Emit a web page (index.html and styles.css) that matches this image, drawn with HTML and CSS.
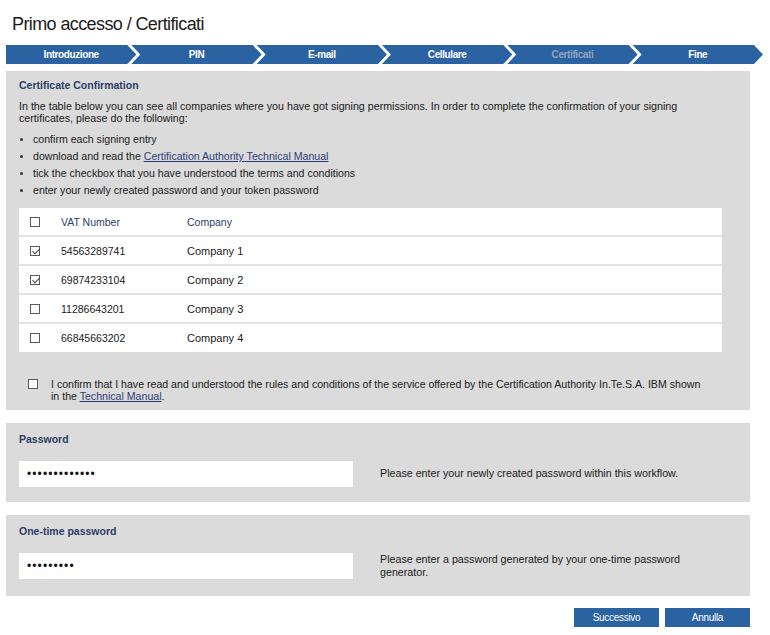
FILE: index.html
```html
<!DOCTYPE html>
<html lang="it">
<head>
<meta charset="utf-8">
<title>Primo accesso / Certificati</title>
<link rel="stylesheet" href="styles.css">
</head>
<body>
<div class="page">
  <h1 class="title">Primo accesso / Certificati</h1>

  <ol class="steps">
    <li class="step">Introduzione</li>
    <li class="step">PIN</li>
    <li class="step">E-mail</li>
    <li class="step">Cellulare</li>
    <li class="step step-current">Certificati</li>
    <li class="step">Fine</li>
  </ol>

  <section class="panel panel-cert">
    <h2 class="panel-title">Certificate Confirmation</h2>
    <p class="intro">In the table below you can see all companies where you have got signing permissions. In order to complete the confirmation of your signing certificates, please do the following:</p>
    <ul class="todo">
      <li>confirm each signing entry</li>
      <li>download and read the <a href="#" class="link">Certification Authority Technical Manual</a></li>
      <li>tick the checkbox that you have understood the terms and conditions</li>
      <li>enter your newly created password and your token password</li>
    </ul>

    <table class="companies">
      <thead>
        <tr>
          <th class="col-check"><span class="cb"></span></th>
          <th class="col-vat">VAT Number</th>
          <th class="col-company">Company</th>
        </tr>
      </thead>
      <tbody>
        <tr>
          <td class="col-check"><span class="cb cb-checked"></span></td>
          <td class="col-vat">54563289741</td>
          <td class="col-company">Company 1</td>
        </tr>
        <tr>
          <td class="col-check"><span class="cb cb-checked"></span></td>
          <td class="col-vat">69874233104</td>
          <td class="col-company">Company 2</td>
        </tr>
        <tr>
          <td class="col-check"><span class="cb"></span></td>
          <td class="col-vat">11286643201</td>
          <td class="col-company">Company 3</td>
        </tr>
        <tr>
          <td class="col-check"><span class="cb"></span></td>
          <td class="col-vat">66845663202</td>
          <td class="col-company">Company 4</td>
        </tr>
      </tbody>
    </table>

    <div class="confirm">
      <span class="cb"></span>
      <p class="confirm-text">I confirm that I have read and understood the rules and conditions of the service offered by the Certification Authority In.Te.S.A. IBM shown in the <a href="#" class="link">Technical Manual</a>.</p>
    </div>
  </section>

  <section class="panel panel-field">
    <h2 class="panel-title">Password</h2>
    <div class="field-row">
      <div class="input">•••••••••••••</div>
      <p class="help">Please enter your newly created password within this workflow.</p>
    </div>
  </section>

  <section class="panel panel-field panel-otp">
    <h2 class="panel-title">One-time password</h2>
    <div class="field-row">
      <div class="input">•••••••••</div>
      <p class="help">Please enter a password generated by your one-time password generator.</p>
    </div>
  </section>

  <div class="actions">
    <button class="btn" type="button">Successivo</button>
    <button class="btn" type="button">Annulla</button>
  </div>
</div>
</body>
</html>
```

FILE: styles.css
```css
* { box-sizing: border-box; }

body {
  margin: 0;
  background: #ffffff;
  font-family: "Liberation Sans", Arial, sans-serif;
  color: #1a1a1a;
}

.page {
  width: 770px;
  padding: 12px 0 8px 6px;
}

.title {
  margin: 0 0 0 6px;
  height: 24px;
  font-size: 18px;
  line-height: 24px;
  letter-spacing: -0.6px;
  font-weight: normal;
  color: #1b1b1b;
}

/* stepper */
.steps {
  list-style: none;
  margin: 9px 0 0;
  padding: 0;
  display: flex;
  width: 757px;
  height: 19px;
}

.step {
  flex: 1;
  margin-left: -5px;
  background: #2b63a2;
  color: #ffffff;
  font-size: 10px;
  font-weight: bold;
  line-height: 19px;
  text-align: center;
  letter-spacing: -0.4px;
  clip-path: polygon(0 0, calc(100% - 9px) 0, 100% 50%, calc(100% - 9px) 100%, 0 100%, 9px 50%);
}

.step:first-child {
  margin-left: 0;
  clip-path: polygon(0 0, calc(100% - 9px) 0, 100% 50%, calc(100% - 9px) 100%, 0 100%);
}

.step-current { color: #8fa3bd; }

/* panels */
.panel {
  width: 744px;
  background: #dbdbdb;
}

.panel-title {
  margin: 0;
  font-size: 10.5px;
  line-height: 14px;
  font-weight: bold;
  color: #2b3d66;
}

.panel-cert {
  margin-top: 7px;
  padding: 7px 28px 7px 13px;
}

.intro {
  margin: 8px 0 0;
  font-size: 10.7px;
  line-height: 12px;
}

.todo {
  list-style: none;
  margin: 7px 0 0;
  padding: 0;
}

.todo li {
  position: relative;
  padding-left: 14px;
  font-size: 10.6px;
  line-height: 17px;
}

.todo li::before {
  content: "";
  position: absolute;
  left: 1px;
  top: 7px;
  width: 3px;
  height: 3px;
  border-radius: 50%;
  background: #333333;
}

.link { color: #2b3d78; text-decoration: underline; }

/* table */
.companies {
  margin-top: 9px;
  width: 703px;
  border-collapse: collapse;
  background: #ffffff;
}

.companies th,
.companies td {
  padding: 0;
  text-align: left;
  vertical-align: middle;
}

.companies thead tr { height: 28px; }

.companies tbody tr {
  height: 29px;
  border-top: 2px solid #e3e3e3;
}

.companies th {
  font-size: 10.5px;
  font-weight: normal;
  color: #2b3d66;
}

.col-check { width: 42px; padding-left: 11px !important; }
.col-vat { width: 126px; font-size: 10.5px; }
.col-company { font-size: 11px; }
.companies th.col-company { font-size: 10.5px; }

.cb {
  display: block;
  width: 10px;
  height: 10px;
  border: 1px solid #5a5a5a;
  background: #ffffff;
  position: relative;
}

.cb-checked::after {
  content: "";
  position: absolute;
  left: 3px;
  top: 0px;
  width: 3px;
  height: 6px;
  border-right: 1px solid #444444;
  border-bottom: 1px solid #444444;
  transform: rotate(45deg);
}

/* confirm */
.confirm {
  display: flex;
  gap: 13px;
  margin-top: 26px;
  padding-left: 9px;
}

.confirm .cb { margin-top: 1px; flex: none; }

.confirm-text {
  margin: 0;
  width: 652px;
  flex: none;
  font-size: 10.6px;
  line-height: 12.4px;
}

/* field panels */
.panel-field {
  margin-top: 13px;
  padding: 9px 13px 15px;
}

.panel-otp { padding-bottom: 17px; }

.field-row {
  display: flex;
  align-items: center;
  gap: 27px;
  margin-top: 15px;
}

.input {
  width: 334px;
  height: 26px;
  background: #ffffff;
  padding-left: 8px;
  font-size: 12px;
  line-height: 26px;
  letter-spacing: 1.1px;
  color: #111111;
}

.help {
  margin: 0;
  width: 310px;
  font-size: 10.7px;
  line-height: 13px;
}

/* actions */
.actions {
  display: flex;
  justify-content: flex-end;
  gap: 6px;
  width: 744px;
  margin-top: 12px;
}

.btn {
  width: 85px;
  height: 19px;
  border: 0;
  padding: 0;
  background: #2b63a2;
  color: #ffffff;
  font-family: "Liberation Sans", Arial, sans-serif;
  font-size: 10px;
  letter-spacing: -0.3px;
}
```
